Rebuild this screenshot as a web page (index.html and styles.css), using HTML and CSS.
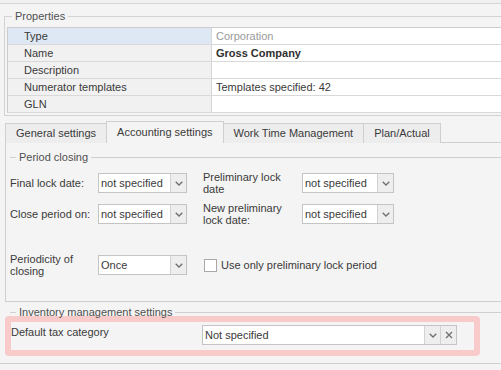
FILE: index.html
```html
<!DOCTYPE html>
<html lang="en">
<head>
  <meta charset="UTF-8">
  <meta name="viewport" content="width=device-width, initial-scale=1.0">
  <title>Company properties</title>
  <link rel="stylesheet" href="styles.css">
</head>
<body>
  <div class="top-strip"></div>

  <fieldset class="props">
    <legend>Properties</legend>
    <div class="prop-grid">
      <div class="prop-row selected">
        <div class="prop-name">Type</div>
        <div class="prop-value muted">Corporation</div>
      </div>
      <div class="prop-row">
        <div class="prop-name">Name</div>
        <div class="prop-value strong">Gross Company</div>
      </div>
      <div class="prop-row">
        <div class="prop-name">Description</div>
        <div class="prop-value"></div>
      </div>
      <div class="prop-row">
        <div class="prop-name">Numerator templates</div>
        <div class="prop-value">Templates specified: 42</div>
      </div>
      <div class="prop-row">
        <div class="prop-name">GLN</div>
        <div class="prop-value"></div>
      </div>
    </div>
  </fieldset>

  <div class="tabs">
    <div class="tab">General settings</div>
    <div class="tab active">Accounting settings</div>
    <div class="tab">Work Time Management</div>
    <div class="tab">Plan/Actual</div>
  </div>

  <div class="tab-panel">
    <div class="group-title"><span>Period closing</span></div>

    <div class="form-grid">
      <label>Final lock date:</label>
      <div class="combo">
        <div class="combo-text">not specified</div>
        <div class="combo-btn"><svg width="8" height="5" viewBox="0 0 8 5"><path d="M0.7 0.7 L4 4 L7.3 0.7" fill="none" stroke="#707070" stroke-width="1.3"/></svg></div>
      </div>
      <label class="col-two">Preliminary lock date</label>
      <div class="combo">
        <div class="combo-text">not specified</div>
        <div class="combo-btn"><svg width="8" height="5" viewBox="0 0 8 5"><path d="M0.7 0.7 L4 4 L7.3 0.7" fill="none" stroke="#707070" stroke-width="1.3"/></svg></div>
      </div>

      <label>Close period on:</label>
      <div class="combo">
        <div class="combo-text">not specified</div>
        <div class="combo-btn"><svg width="8" height="5" viewBox="0 0 8 5"><path d="M0.7 0.7 L4 4 L7.3 0.7" fill="none" stroke="#707070" stroke-width="1.3"/></svg></div>
      </div>
      <label class="col-two">New preliminary lock date:</label>
      <div class="combo">
        <div class="combo-text">not specified</div>
        <div class="combo-btn"><svg width="8" height="5" viewBox="0 0 8 5"><path d="M0.7 0.7 L4 4 L7.3 0.7" fill="none" stroke="#707070" stroke-width="1.3"/></svg></div>
      </div>
    </div>

    <div class="form-grid periodicity">
      <label>Periodicity of closing</label>
      <div class="combo">
        <div class="combo-text">Once</div>
        <div class="combo-btn"><svg width="8" height="5" viewBox="0 0 8 5"><path d="M0.7 0.7 L4 4 L7.3 0.7" fill="none" stroke="#707070" stroke-width="1.3"/></svg></div>
      </div>
      <label class="check-label"><span class="check"></span>Use only preliminary lock period</label>
    </div>
  </div>

  <div class="group-title inventory"><span>Inventory management settings</span></div>

  <div class="highlight">
    <label class="tax-label">Default tax category</label>
    <div class="combo wide">
      <div class="combo-text">Not specified</div>
      <div class="combo-btn"><svg width="8" height="5" viewBox="0 0 8 5"><path d="M0.7 0.7 L4 4 L7.3 0.7" fill="none" stroke="#707070" stroke-width="1.3"/></svg></div>
      <div class="combo-btn"><svg width="8" height="8" viewBox="0 0 8 8"><path d="M1 1 L7 7 M7 1 L1 7" fill="none" stroke="#707070" stroke-width="1.3"/></svg></div>
    </div>
  </div>

  <div class="bottom-line"></div>
</body>
</html>
```

FILE: styles.css
```css
* {
  margin: 0;
  padding: 0;
  box-sizing: border-box;
}

body {
  font-family: 'Liberation Sans', Arial, sans-serif;
  font-size: 11px;
  color: #3a3a3a;
  background: #f4f4f4;
  width: 501px;
  height: 370px;
  overflow: hidden;
}

.top-strip {
  height: 4px;
  background: #f0f0f0;
  border-bottom: 1px solid #d6d6d6;
}

/* Properties group */
.props {
  margin: 5px -20px 0 4px;
  border: 1px solid #d3d3d3;
  padding: 0 0 2px 2px;
}

.props legend {
  margin-left: 5px;
  padding: 0 3px;
  line-height: 14px;
  color: #505050;
}

.prop-grid {
  margin-top: 4px;
  border-top: 1px solid #cdcdcd;
  border-left: 1px solid #cdcdcd;
  background: #fff;
}

.prop-row {
  display: flex;
  height: 17px;
  border-bottom: 1px solid #d9d9d9;
}

.prop-name {
  width: 204px;
  padding-left: 16px;
  line-height: 16px;
  background: #f1f1f1;
  border-right: 1px solid #d6d6d6;
}

.prop-row.selected .prop-name {
  background: #dde8f4;
}

.prop-value {
  flex: 1;
  padding-left: 4px;
  line-height: 16px;
}

.prop-value.muted {
  color: #9a9a9a;
}

.prop-value.strong {
  font-weight: bold;
  color: #303030;
}

/* Tabs */
.tabs {
  display: flex;
  align-items: flex-end;
  height: 22px;
  margin: 5px 0 0 5px;
}

.tab {
  height: 20px;
  padding: 0 10px;
  line-height: 19px;
  border: 1px solid #cfcfcf;
  border-bottom: none;
  background: #ededed;
  margin-right: -1px;
}

.tab.active {
  position: relative;
  z-index: 1;
  height: 22px;
  line-height: 20px;
  background: #f4f4f4;
}

.tab-panel {
  margin: -1px -20px 0 5px;
  border: 1px solid #cfcfcf;
  padding: 7px 0 26px 4px;
}

/* Group headers with a line */
.group-title {
  display: flex;
  align-items: center;
  line-height: 14px;
  color: #505050;
}

.group-title::before {
  content: '';
  width: 6px;
  border-top: 1px solid #cfcfcf;
}

.group-title::after {
  content: '';
  flex: 1;
  border-top: 1px solid #cfcfcf;
}

.group-title span {
  padding: 0 3px;
}

.group-title.inventory {
  margin: 3px 0 0 10px;
}

/* Form rows */
.form-grid {
  display: grid;
  grid-template-columns: 88px 89px 115px 92px;
  grid-auto-rows: 20px;
  row-gap: 11px;
  align-items: center;
  margin-top: 9px;
}

.form-grid label {
  line-height: 12px;
}

.form-grid .col-two {
  padding-left: 16px;
  padding-right: 4px;
}

.form-grid.periodicity {
  grid-template-columns: 88px 89px 1fr;
  margin-top: 31px;
}

.check-label {
  display: flex;
  align-items: center;
  padding-left: 17px;
}

.check {
  width: 13px;
  height: 13px;
  border: 1px solid #a9a9a9;
  background: #fff;
  margin-right: 4px;
}

/* Combo box */
.combo {
  display: flex;
  height: 20px;
  border: 1px solid #c4c4c4;
  background: #fff;
}

.combo-text {
  flex: 1;
  padding-left: 2px;
  line-height: 18px;
  white-space: nowrap;
  overflow: hidden;
}

.combo-btn {
  width: 16px;
  display: flex;
  justify-content: center;
  align-items: center;
  border-left: 1px solid #d2d2d2;
  background: #eeeeee;
}

/* Highlighted inventory row */
.highlight {
  display: flex;
  align-items: flex-start;
  margin: -3px 21px 0 5px;
  padding: 3px 17px 5px 0;
  border: 6px solid #f8caca;
  border-radius: 4px;
}

.tax-label {
  width: 191px;
  line-height: 14px;
}

.combo.wide {
  width: 255px;
}

.bottom-line {
  margin-top: 7px;
  border-top: 1px solid #d0d0d0;
}
```
